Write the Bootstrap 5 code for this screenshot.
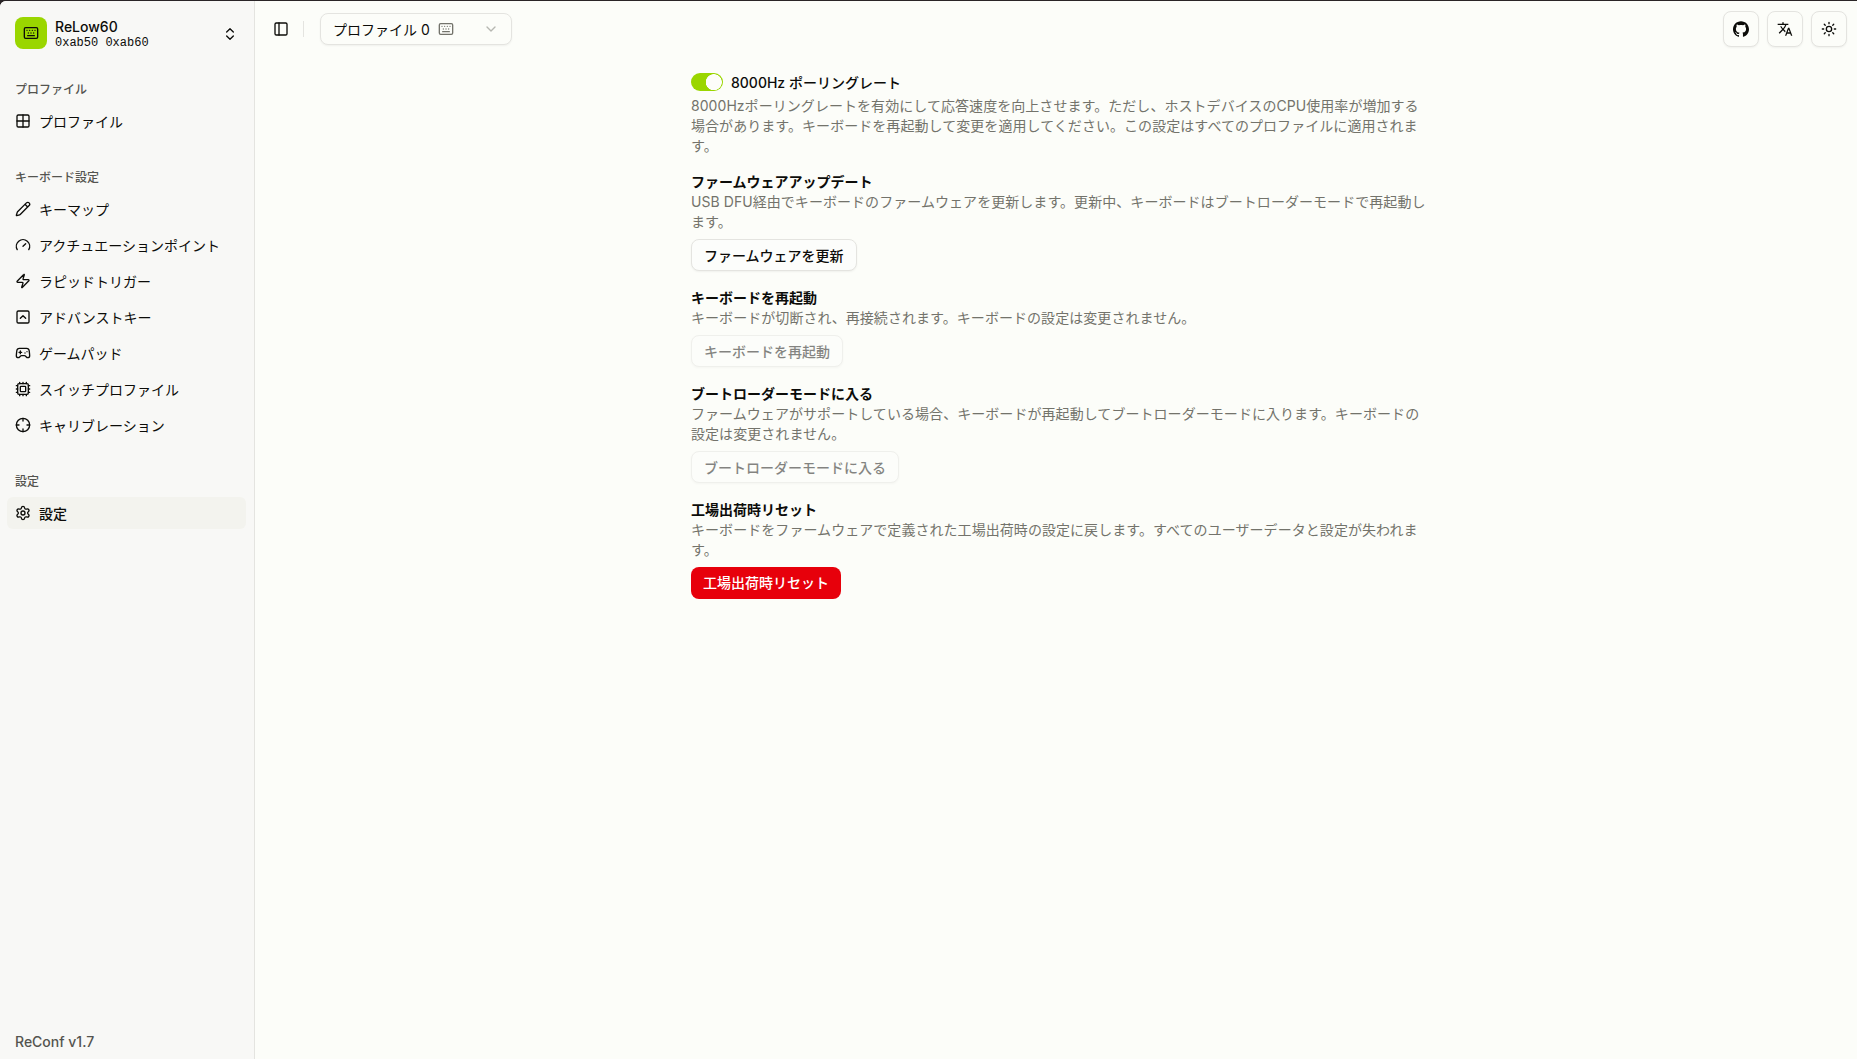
<!DOCTYPE html>
<html lang="ja">
<head>
<meta charset="utf-8">
<meta name="viewport" content="width=device-width, initial-scale=1">
<title>ReConf</title>
<link href="https://cdn.jsdelivr.net/npm/bootstrap@5.3.0/dist/css/bootstrap.min.css" rel="stylesheet">
<style>
  :root { --ink: #0c0c09; --muted: #73736b; --line: #e4e4e0; --page: #fcfdf9; --side: #f8f8f6; --lime: #9ad600; }
  body { font-family: Inter, "Noto Sans CJK JP", sans-serif; font-size: 14px; line-height: 20px; color: var(--ink); background: #2a2527; overflow: hidden; }
  svg { display: block; flex: none; }
  .ic { width: 16px; height: 16px; fill: none; stroke: currentColor; stroke-width: 2; stroke-linecap: round; stroke-linejoin: round; }
  .window-edge { padding-top: 1px; }
  .app { background: var(--page); border-top-left-radius: 6px; }
  .side { width: 255px; background: var(--side); border-right: 1px solid var(--line); padding-left: 7px; padding-right: 8px; }
  .device { height: 48px; padding: 9px 8px 7px; margin: 8px 0 16px; }
  .device-logo { width: 32px; height: 32px; border-radius: 8px; background: var(--lime); margin-top: -2px; }
  .device-name { line-height: 17px; }
  .device-id { font-family: "Liberation Mono", monospace; font-size: 12px; line-height: 16px; }
  .group { margin-bottom: 24px; }
  .group-label { height: 32px; padding: 2px 8px 0; font-size: 12px; font-weight: 500; color: #54544f; }
  .side .nav-link { height: 32px; padding: 0 8px; border-radius: 6px; color: var(--ink); gap: 8px; }
  .side .nav-link.active { background: #f3f3ee; font-weight: 500; }
  .side .nav-link span { padding-top: 1px; }
  .version { padding: 0 8px 7px; color: #54544f; font-weight: 500; }
  .topbar { height: 56px; padding: 0 10px 0 18px; }
  .rule { width: 1px; height: 16px; background: var(--line); margin: 0 16px 0 14px; }
  .picker, .tool, .btn-plain { border: 1px solid var(--line); border-radius: 8px; box-shadow: 0 1px 2px rgba(0,0,0,.05); }
  .picker { width: 192px; height: 32px; padding: 0 12px; background: var(--page); color: var(--ink); }
  .picker span { padding-top: 1px; }
  .tool { width: 36px; height: 36px; color: var(--ink); background: var(--page); }
  .settings { width: 736px; gap: 16px; padding-top: 16px; }
  .pane { padding-left: 6px; }
  .desc { color: var(--muted); }
  .settings .desc { letter-spacing: .055px; padding-top: 1px; margin-bottom: -1px; }
  .settings h2 { font-size: 14px; line-height: 20px; font-weight: 600; margin: 0; padding-top: 1px; margin-bottom: -1px; }
  .polling { height: 18.4px; }
  .polling label { font-weight: 500; padding-top: 1px; }
  .settings .form-check-input { width: 32px; height: 18.4px; margin: 0; border: 0; background-color: var(--lime); box-shadow: none;
    background-image: radial-gradient(circle at 22.8px 9.2px, #fdfdfa 7.7px, transparent 8.3px); background-position: 0 0; background-size: 100% 100%; }
  .settings .btn { height: 32px; padding: 0 12px; margin-top: 8px; font-size: 14px; line-height: 20px; font-weight: 500; border-radius: 8px; align-self: flex-start; }
  .btn-plain, .btn-plain:disabled { background: #fcfdfb; border-color: var(--line); color: var(--ink); }
  .btn-plain:disabled { opacity: .5; }
  .settings .btn-reset { background: #e7000b; color: #fff; border: 0; }
  .settings .btn-plain { padding-top: 1px; }
</style>
<script src="https://cdn.jsdelivr.net/npm/bootstrap@5.3.0/dist/js/bootstrap.bundle.min.js"></script>
</head>
<body>
<svg width="0" height="0" class="d-none">
  <symbol id="keyboard" viewBox="0 0 24 24"><rect width="20" height="16" x="2" y="4" rx="2"/><path d="M10 8h.01M12 12h.01M14 8h.01M16 12h.01M18 8h.01M6 8h.01M7 16h10M8 12h.01"/></symbol>
</svg>
<div class="window-edge vh-100 d-flex flex-column">
<div class="app d-flex flex-grow-1 overflow-hidden">
  <aside class="side d-flex flex-column flex-shrink-0">
    <div class="device d-flex align-items-center gap-2">
      <div class="device-logo d-flex align-items-center justify-content-center"><svg class="ic"><use href="#keyboard"/></svg></div>
      <div class="flex-grow-1"><div class="device-name" style="font-weight:500">ReLow60</div><div class="device-id">0xab50 0xab60</div></div>
      <svg class="ic" viewBox="0 0 24 24"><path d="m7 15 5 5 5-5M7 9l5-5 5 5"/></svg>
    </div>
    <div class="group">
      <div class="group-label d-flex align-items-center">プロファイル</div>
      <nav class="nav flex-column gap-1">
        <a class="nav-link d-flex align-items-center"><svg class="ic" viewBox="0 0 24 24"><path d="M12 3v18M3 12h18"/><rect x="3" y="3" width="18" height="18" rx="2"/></svg><span>プロファイル</span></a>
      </nav>
    </div>
    <div class="group">
      <div class="group-label d-flex align-items-center">キーボード設定</div>
      <nav class="nav flex-column gap-1">
        <a class="nav-link d-flex align-items-center"><svg class="ic" viewBox="0 0 24 24"><path d="M21.174 6.812a1 1 0 0 0-3.986-3.987L3.842 16.174a2 2 0 0 0-.5.83l-1.321 4.352a.5.5 0 0 0 .623.622l4.353-1.32a2 2 0 0 0 .83-.497zM15 5l4 4"/></svg><span>キーマップ</span></a>
        <a class="nav-link d-flex align-items-center"><svg class="ic" viewBox="0 0 24 24"><path d="m12 14 4-4M3.34 19a10 10 0 1 1 17.32 0"/></svg><span>アクチュエーションポイント</span></a>
        <a class="nav-link d-flex align-items-center"><svg class="ic" viewBox="0 0 24 24"><path d="M4 14a1 1 0 0 1-.78-1.63l9.9-10.2a.5.5 0 0 1 .86.46l-1.92 6.02A1 1 0 0 0 13 10h7a1 1 0 0 1 .78 1.63l-9.9 10.2a.5.5 0 0 1-.86-.46l1.92-6.02A1 1 0 0 0 11 14z"/></svg><span>ラピッドトリガー</span></a>
        <a class="nav-link d-flex align-items-center"><svg class="ic" viewBox="0 0 24 24"><rect width="18" height="18" x="3" y="3" rx="2"/><path d="m8 14 4-4 4 4"/></svg><span>アドバンストキー</span></a>
        <a class="nav-link d-flex align-items-center"><svg class="ic" viewBox="0 0 24 24"><path d="M6 11h4M8 9v4M15 12h.01M18 10h.01M17.32 5H6.68a4 4 0 0 0-3.978 3.59c-.006.052-.01.101-.017.152C2.604 9.416 2 14.456 2 16a3 3 0 0 0 3 3c1 0 1.500-.5 2-1l1.414-1.414A2 2 0 0 1 9.828 16h4.344a2 2 0 0 1 1.414.586L17 18c.5.5 1 1 2 1a3 3 0 0 0 3-3c0-1.545-.604-6.584-.685-7.258-.007-.05-.011-.1-.017-.151A4 4 0 0 0 17.320 5z"/></svg><span>ゲームパッド</span></a>
        <a class="nav-link d-flex align-items-center"><svg class="ic" viewBox="0 0 24 24"><path d="M12 20v2M12 2v2M17 20v2M17 2v2M2 12h2M2 17h2M2 7h2M20 12h2M20 17h2M20 7h2M7 20v2M7 2v2"/><rect x="4" y="4" width="16" height="16" rx="2"/><rect x="8" y="8" width="8" height="8" rx="1"/></svg><span>スイッチプロファイル</span></a>
        <a class="nav-link d-flex align-items-center"><svg class="ic" viewBox="0 0 24 24"><circle cx="12" cy="12" r="10"/><path d="M22 12h-4M6 12H2M12 6V2M12 22v-4"/></svg><span>キャリブレーション</span></a>
      </nav>
    </div>
    <div class="group">
      <div class="group-label d-flex align-items-center">設定</div>
      <nav class="nav flex-column gap-1">
        <a class="nav-link active d-flex align-items-center"><svg class="ic" viewBox="0 0 24 24"><path d="M9.671 4.136a2.340 2.340 0 0 1 4.659 0 2.340 2.340 0 0 0 3.319 1.915 2.340 2.340 0 0 1 2.330 4.033 2.340 2.340 0 0 0 0 3.831 2.340 2.340 0 0 1-2.330 4.033 2.340 2.340 0 0 0-3.319 1.915 2.340 2.340 0 0 1-4.659 0 2.340 2.340 0 0 0-3.320-1.915 2.340 2.340 0 0 1-2.330-4.033 2.340 2.340 0 0 0 0-3.831A2.340 2.340 0 0 1 6.350 6.051a2.340 2.340 0 0 0 3.319-1.915"/><circle cx="12" cy="12" r="3"/></svg><span>設定</span></a>
      </nav>
    </div>
    <div class="version mt-auto">ReConf v1.7</div>
  </aside>
  <main class="flex-grow-1 d-flex flex-column">
    <header class="topbar d-flex align-items-center">
      <svg class="ic" viewBox="0 0 24 24"><rect width="18" height="18" x="3" y="3" rx="2"/><path d="M9 3v18"/></svg>
      <div class="rule"></div>
      <button class="picker d-flex align-items-center gap-2"><span>プロファイル 0</span>
        <svg class="ic desc"><use href="#keyboard"/></svg>
        <svg class="ic desc ms-auto opacity-50" viewBox="0 0 24 24"><path d="m6 9 6 6 6-6"/></svg>
      </button>
      <div class="d-flex gap-2 ms-auto">
        <button class="tool d-flex align-items-center justify-content-center p-0"><svg width="16" height="16" viewBox="0 0 24 24" fill="currentColor"><path d="M12 .297c-6.630 0-12 5.373-12 12 0 5.303 3.438 9.800 8.205 11.385.6.113.82-.258.82-.577 0-.285-.010-1.040-.015-2.040-3.338.724-4.042-1.610-4.042-1.610C4.422 18.070 3.633 17.700 3.633 17.700c-1.087-.744.084-.729.084-.729 1.205.084 1.838 1.236 1.838 1.236 1.070 1.835 2.809 1.305 3.495.998.108-.776.417-1.305.76-1.605-2.665-.3-5.466-1.332-5.466-5.930 0-1.310.465-2.380 1.235-3.220-.135-.303-.54-1.523.105-3.176 0 0 1.005-.322 3.300 1.230.96-.267 1.980-.399 3-.405 1.020.006 2.040.138 3 .405 2.280-1.552 3.285-1.230 3.285-1.230.645 1.653.24 2.873.12 3.176.765.84 1.230 1.910 1.230 3.220 0 4.610-2.805 5.625-5.475 5.920.42.36.81 1.096.81 2.220 0 1.606-.015 2.896-.015 3.286 0 .315.21.69.825.57C20.565 22.092 24 17.592 24 12.297c0-6.627-5.373-12-12-12"/></svg></button>
        <button class="tool d-flex align-items-center justify-content-center p-0"><svg width="16" height="16" viewBox="0 0 24 24" fill="currentColor"><path d="m12.870 15.070-2.540-2.510.03-.03A17.520 17.520 0 0 0 14.070 6H17V4h-7V2H8v2H1v2h11.170C11.500 7.920 10.440 9.750 9 11.350 8.070 10.320 7.300 9.190 6.690 8h-2c.73 1.630 1.730 3.170 2.980 4.560l-5.090 5.020L4 19l5-5 3.110 3.110zM18.500 10h-2L12 22h2l1.120-3h4.750L21 22h2zm-2.620 7 1.620-4.330L19.120 17z"/></svg></button>
        <button class="tool d-flex align-items-center justify-content-center p-0"><svg class="ic" viewBox="0 0 24 24"><circle cx="12" cy="12" r="4"/><path d="M12 2v2M12 20v2M4.930 4.930l1.410 1.410M17.660 17.660l1.410 1.410M2 12h2M20 12h2M6.340 17.660l-1.410 1.410M19.070 4.930l-1.410 1.410"/></svg></button>
      </div>
    </header>
    <div class="pane">
      <div class="settings mx-auto d-flex flex-column">
        <section class="d-flex flex-column gap-1">
          <div class="polling form-switch p-0 d-flex align-items-center gap-2"><input class="form-check-input float-none" type="checkbox" role="switch" id="polling" checked><label for="polling">8000Hz ポーリングレート</label></div>
          <div class="desc">8000Hzポーリングレートを有効にして応答速度を向上させます。ただし、ホストデバイスのCPU使用率が増加する場合があります。キーボードを再起動して変更を適用してください。この設定はすべてのプロファイルに適用されます。</div>
        </section>
        <section class="d-flex flex-column">
          <h2>ファームウェアアップデート</h2>
          <div class="desc">USB DFU経由でキーボードのファームウェアを更新します。更新中、キーボードはブートローダーモードで再起動します。</div>
          <button class="btn btn-plain">ファームウェアを更新</button>
        </section>
        <section class="d-flex flex-column">
          <h2>キーボードを再起動</h2>
          <div class="desc">キーボードが切断され、再接続されます。キーボードの設定は変更されません。</div>
          <button class="btn btn-plain" disabled>キーボードを再起動</button>
        </section>
        <section class="d-flex flex-column">
          <h2>ブートローダーモードに入る</h2>
          <div class="desc">ファームウェアがサポートしている場合、キーボードが再起動してブートローダーモードに入ります。キーボードの設定は変更されません。</div>
          <button class="btn btn-plain" disabled>ブートローダーモードに入る</button>
        </section>
        <section class="d-flex flex-column">
          <h2>工場出荷時リセット</h2>
          <div class="desc">キーボードをファームウェアで定義された工場出荷時の設定に戻します。すべてのユーザーデータと設定が失われます。</div>
          <button class="btn btn-reset">工場出荷時リセット</button>
        </section>
      </div>
    </div>
  </main>
</div>
</div>
</body>
</html>
